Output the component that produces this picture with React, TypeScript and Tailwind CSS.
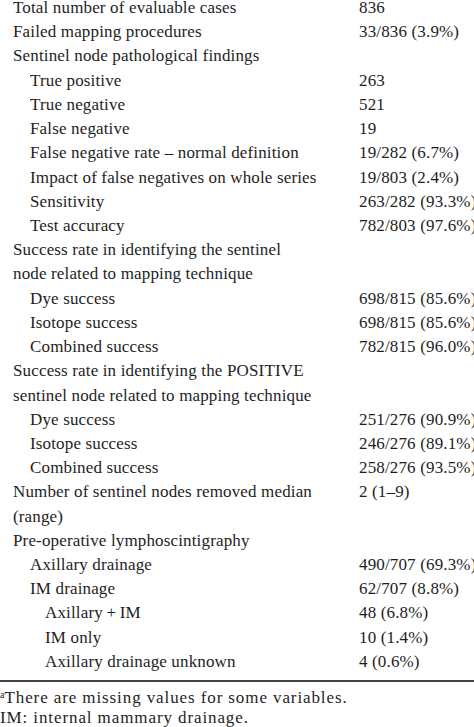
type Row = { label: string; value?: string; level?: 0 | 1 | 2 };

const rows: Row[] = [
  { label: "Total number of evaluable cases", value: "836" },
  { label: "Failed mapping procedures", value: "33/836 (3.9%)" },
  { label: "Sentinel node pathological findings" },
  { label: "True positive", value: "263", level: 1 },
  { label: "True negative", value: "521", level: 1 },
  { label: "False negative", value: "19", level: 1 },
  { label: "False negative rate \u2013 normal definition", value: "19/282 (6.7%)", level: 1 },
  { label: "Impact of false negatives on whole series", value: "19/803 (2.4%)", level: 1 },
  { label: "Sensitivity", value: "263/282 (93.3%)", level: 1 },
  { label: "Test accuracy", value: "782/803 (97.6%)", level: 1 },
  { label: "Success rate in identifying the sentinel" },
  { label: "node related to mapping technique" },
  { label: "Dye success", value: "698/815 (85.6%)", level: 1 },
  { label: "Isotope success", value: "698/815 (85.6%)", level: 1 },
  { label: "Combined success", value: "782/815 (96.0%)", level: 1 },
  { label: "Success rate in identifying the POSITIVE" },
  { label: "sentinel node related to mapping technique" },
  { label: "Dye success", value: "251/276 (90.9%)", level: 1 },
  { label: "Isotope success", value: "246/276 (89.1%)", level: 1 },
  { label: "Combined success", value: "258/276 (93.5%)", level: 1 },
  { label: "Number of sentinel nodes removed median", value: "2 (1\u20139)" },
  { label: "(range)" },
  { label: "Pre-operative lymphoscintigraphy" },
  { label: "Axillary drainage", value: "490/707 (69.3%)", level: 1 },
  { label: "IM drainage", value: "62/707 (8.8%)", level: 1 },
  { label: "Axillary\u2009+\u2009IM", value: "48 (6.8%)", level: 2 },
  { label: "IM only", value: "10 (1.4%)", level: 2 },
  { label: "Axillary drainage unknown", value: "4 (0.6%)", level: 2 },
];

const indent = ["pl-0", "pl-[17px]", "pl-[32px]"];

export default function App() {
  return (
    <div className="h-[727px] w-[474px] overflow-hidden bg-white font-['Liberation_Serif',serif] text-[17px] tracking-[0.15px] text-[#1e1e1e]">
      {/* table body, top row is cropped in the source */}
      <div className="-mt-[4px] grid grid-cols-[346px_1fr] pl-[13px] leading-[24.22px]">
        {rows.map((r, i) => (
          <div key={i} className="contents">
            <div className={`whitespace-nowrap ${indent[r.level ?? 0]}`}>{r.label}</div>
            <div className="whitespace-nowrap">{r.value ?? ""}</div>
          </div>
        ))}
      </div>
      <div className="mt-[6px] h-[1.5px] w-full bg-[#444]" />
      {/* footnotes */}
      <div className="mt-[6px] leading-[20px] tracking-[0.9px]">
        <p>
          <sup className="text-[10px] tracking-normal">a</sup>There are missing values for some variables.
        </p>
        <p>IM: internal mammary drainage.</p>
      </div>
    </div>
  );
}
